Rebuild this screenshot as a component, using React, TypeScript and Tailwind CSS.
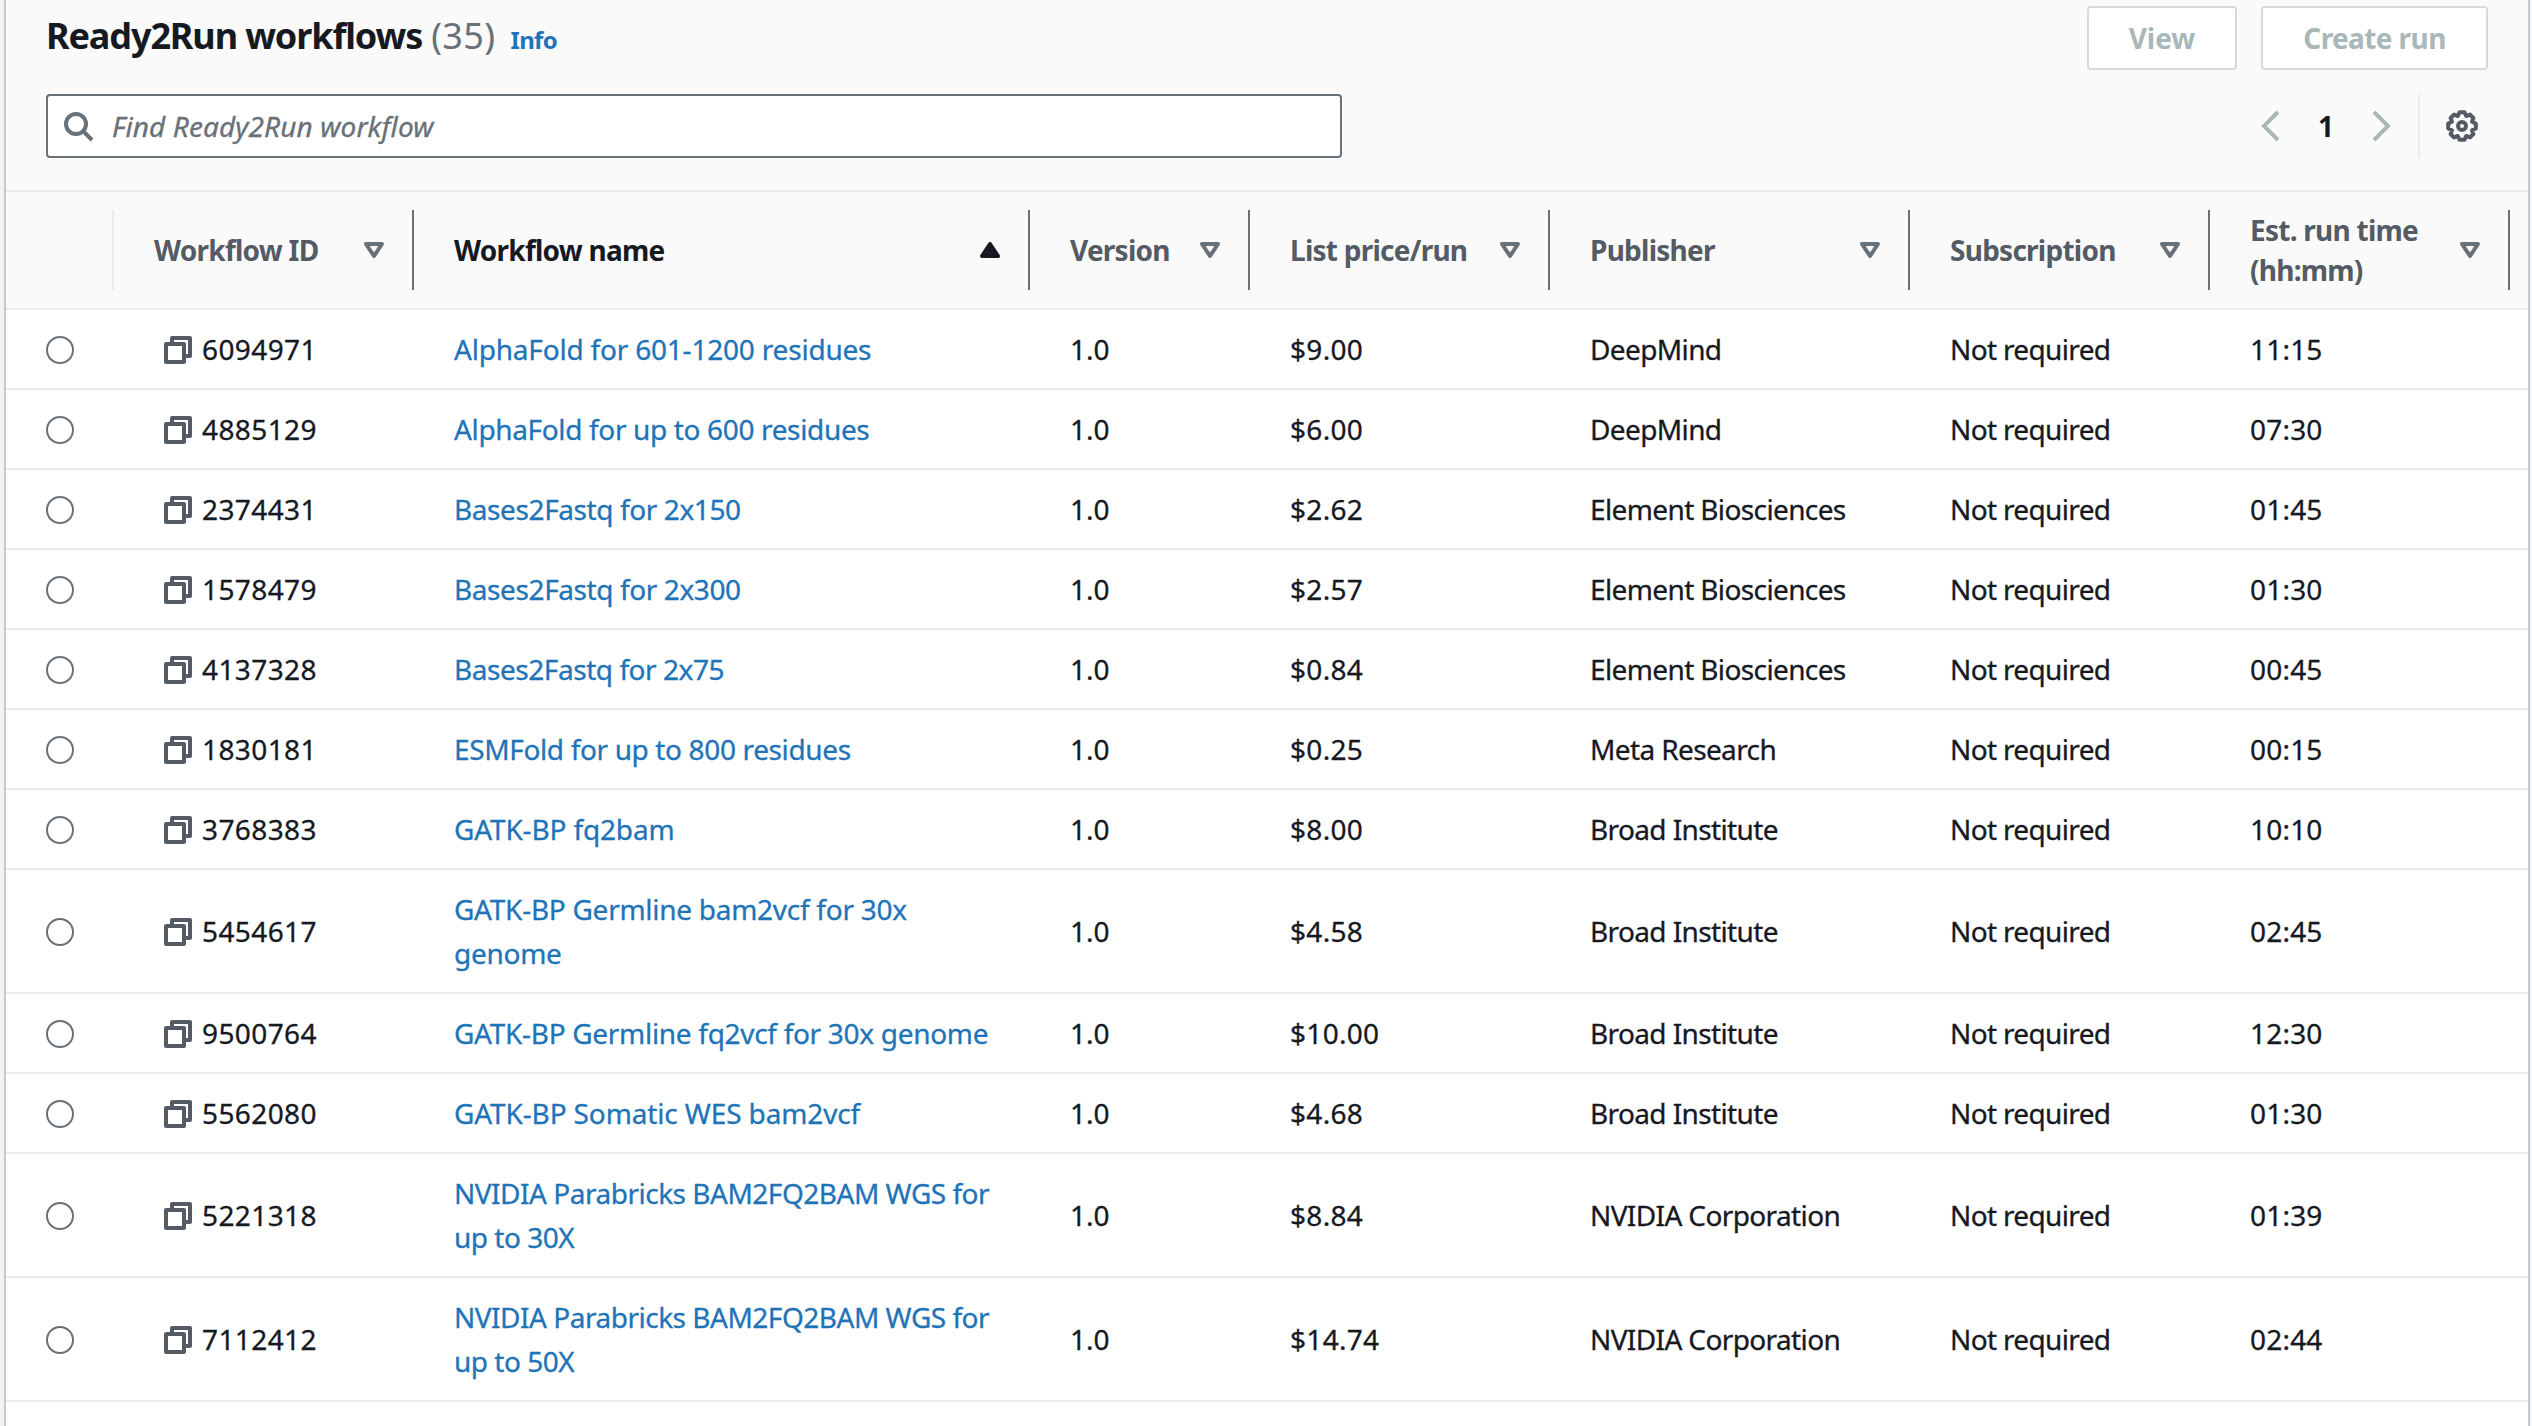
import React from "react";

type Column = { label: string; width: string; sorted?: boolean };

const columns: Column[] = [
  { label: "Workflow ID", width: "w-[300px]" },
  { label: "Workflow name", width: "w-[616px]", sorted: true },
  { label: "Version", width: "w-[220px]" },
  { label: "List price/run", width: "w-[300px]" },
  { label: "Publisher", width: "w-[360px]" },
  { label: "Subscription", width: "w-[300px]" },
  { label: "Est. run time (hh:mm)", width: "w-[300px]" },
];

type Row = { id: string; name: string; tracking: string; price: string; publisher: string; time: string };

const rows: Row[] = [
  { id: "6094971", name: "AlphaFold for 601-1200 residues", tracking: "tracking-[-0.2px]", price: "$9.00", publisher: "DeepMind", time: "11:15" },
  { id: "4885129", name: "AlphaFold for up to 600 residues", tracking: "tracking-[-0.35px]", price: "$6.00", publisher: "DeepMind", time: "07:30" },
  { id: "2374431", name: "Bases2Fastq for 2x150", tracking: "tracking-[-0.4px]", price: "$2.62", publisher: "Element Biosciences", time: "01:45" },
  { id: "1578479", name: "Bases2Fastq for 2x300", tracking: "tracking-[-0.4px]", price: "$2.57", publisher: "Element Biosciences", time: "01:30" },
  { id: "4137328", name: "Bases2Fastq for 2x75", tracking: "tracking-[-0.45px]", price: "$0.84", publisher: "Element Biosciences", time: "00:45" },
  { id: "1830181", name: "ESMFold for up to 800 residues", tracking: "tracking-[-0.36px]", price: "$0.25", publisher: "Meta Research", time: "00:15" },
  { id: "3768383", name: "GATK-BP fq2bam", tracking: "tracking-[-0.15px]", price: "$8.00", publisher: "Broad Institute", time: "10:10" },
  { id: "5454617", name: "GATK-BP Germline bam2vcf for 30x\ngenome", tracking: "tracking-[-0.27px]", price: "$4.58", publisher: "Broad Institute", time: "02:45" },
  { id: "9500764", name: "GATK-BP Germline fq2vcf for 30x genome", tracking: "tracking-[-0.3px]", price: "$10.00", publisher: "Broad Institute", time: "12:30" },
  { id: "5562080", name: "GATK-BP Somatic WES bam2vcf", tracking: "tracking-[-0.13px]", price: "$4.68", publisher: "Broad Institute", time: "01:30" },
  { id: "5221318", name: "NVIDIA Parabricks BAM2FQ2BAM WGS for\nup to 30X", tracking: "tracking-[-0.49px]", price: "$8.84", publisher: "NVIDIA Corporation", time: "01:39" },
  { id: "7112412", name: "NVIDIA Parabricks BAM2FQ2BAM WGS for\nup to 50X", tracking: "tracking-[-0.49px]", price: "$14.74", publisher: "NVIDIA Corporation", time: "02:44" },
];

function SortIcon({ sorted }: { sorted?: boolean }) {
  return (
    <svg className="h-8 w-8 shrink-0" viewBox="0 0 16 16" strokeWidth="2" strokeLinejoin="round">
      {sorted ? (
        <path d="M8 5l4 6H4z" fill="#16191f" stroke="#16191f" />
      ) : (
        <path d="M4 5h8l-4 6z" fill="none" stroke="#687078" />
      )}
    </svg>
  );
}

function CopyIcon() {
  return (
    <svg className="h-8 w-8 shrink-0" viewBox="0 0 16 16" fill="none" stroke="#545b64" strokeWidth="2" strokeLinejoin="round">
      <path d="M2 5h9v9H2z" />
      <path d="M5 5V2h9v9h-3" />
    </svg>
  );
}

function GearIcon() {
  return (
    <svg className="mr-[10px] h-8 w-8" viewBox="0 0 16 16" fill="none" stroke="#545b64" strokeWidth="2" strokeLinejoin="round">
      <circle cx="8" cy="8" r="2" />
      <path d="M14.9 9.2L13 10.1L13.7 12L12 13.7L10.1 13L9.2 14.9H6.8L5.9 13L4 13.7L2.3 12L3 10.1L1.1 9.2V6.8L3 5.9L2.3 4L4 2.3L5.9 3L6.8 1.1H9.2L10.1 3L12 2.3L13.7 4L13 5.9L14.9 6.8Z" />
    </svg>
  );
}

export default function App() {
  return (
    <div className="flex h-[1426px] w-[2532px] overflow-hidden bg-[#f2f3f3] pl-1 font-['Noto_Sans',sans-serif] text-[28px] leading-[44px] text-[#16191f]">
      <div className="w-[2526px] shrink-0 border-x-2 border-[#c4cacb] bg-white">
        <header className="h-[192px] border-b-2 border-[#ebebeb] bg-[#fafafa] pr-10 pl-10">
          <div className="flex h-[94px] items-start justify-between pt-1.5">
            <h1 className="flex items-baseline pt-[8px] text-[36px]">
              <span className="font-bold tracking-[-1.12px]">Ready2Run workflows</span>
              <span className="ml-[9px] tracking-[0.4px] text-[#687078]">(35)</span>
              <a className="ml-[15px] text-[24px] font-bold tracking-[-0.7px] text-[#1f74b8]">Info</a>
            </h1>
            <div className="flex gap-6 font-bold text-[#aab7b8]">
              <button className="h-16 w-[150px] rounded-[4px] border-2 border-[#d5dbdb] bg-white">View</button>
              <button className="h-16 w-[227px] rounded-[4px] border-2 border-[#d5dbdb] bg-white tracking-[-0.6px]">Create run</button>
            </div>
          </div>
          <div className="flex justify-between">
            <div className="flex h-16 w-[1296px] items-center rounded-[4px] border-2 border-[#687078] bg-white pl-[14px]">
              <svg className="h-8 w-8" viewBox="0 0 16 16" fill="none" stroke="#687078" strokeWidth="2">
                <circle cx="7" cy="7" r="5" />
                <path d="M15 15l-4.5-4.5" />
              </svg>
              <span className="ml-[18px] tracking-[0.1px] text-[#687078] italic [-webkit-text-stroke:0.3px]">Find Ready2Run workflow</span>
            </div>
            <div className="flex h-16 items-center">
              <svg className="h-8 w-8" viewBox="0 0 16 16" fill="none" stroke="#aab7b8" strokeWidth="2">
                <path d="M11 1L4 8l7 7" />
              </svg>
              <span className="w-[76px] text-center font-bold">1</span>
              <svg className="h-8 w-8" viewBox="0 0 16 16" fill="none" stroke="#aab7b8" strokeWidth="2">
                <path d="M5 1l7 7-7 7" />
              </svg>
              <div className="mr-[26px] ml-[22px] h-16 w-0.5 bg-[#ebebeb]" />
              <GearIcon />
            </div>
          </div>
        </header>
        <div className="flex h-[118px] items-center border-b-2 border-[#ebebeb] bg-[#fafafa]">
          <div className="h-20 w-[108px] border-r-2 border-[#ebebeb]" />
          {columns.map((c) => (
            <div key={c.label} className={`${c.width} flex h-20 shrink-0 items-center justify-between border-r-2 border-[#687078] pr-[22px] pl-10`}>
              <span className={`font-bold leading-10 tracking-[-0.75px] ${c.sorted ? "" : "text-[#545b64]"}`}>{c.label}</span>
              <SortIcon sorted={c.sorted} />
            </div>
          ))}
        </div>
        {rows.map((r) => (
          <div key={r.id} className="flex items-center border-b-2 border-[#ebebeb] pt-[18px] pb-4 [-webkit-text-stroke:0.3px]">
            <div className="w-[108px] pl-10">
              <div className="h-7 w-7 rounded-full border-2 border-[#687078]" />
            </div>
            <div className="flex w-[300px] items-center gap-2 pl-12">
              <CopyIcon />
              <span className="-mt-px mb-px tracking-[0.4px]">{r.id}</span>
            </div>
            <div className={`-mt-px mb-px w-[616px] pl-10 whitespace-pre text-[#1f74b8] ${r.tracking}`}>{r.name}</div>
            <div className="-mt-px mb-px w-[220px] pl-10">1.0</div>
            <div className="-mt-px mb-px w-[300px] pl-10 tracking-[0.3px]">{r.price}</div>
            <div className="-mt-px mb-px w-[360px] pl-10 tracking-[-0.62px]">{r.publisher}</div>
            <div className="-mt-px mb-px w-[300px] pl-10 tracking-[-0.65px]">Not required</div>
            <div className="-mt-px mb-px w-[300px] pl-10 tracking-[0.2px]">{r.time}</div>
          </div>
        ))}
      </div>
    </div>
  );
}
